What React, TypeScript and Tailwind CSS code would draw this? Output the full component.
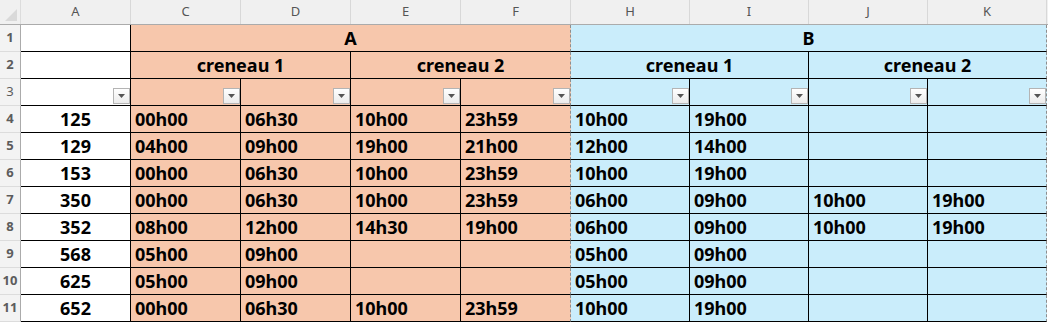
import React from "react";

const font = "font-['Noto_Sans','Liberation_Sans',sans-serif]";

type Col = { w: string; bg: string; edge: string; center?: boolean };

// visible sheet columns (B and G are hidden)
const cols: Col[] = [
  { w: "w-[110px]", bg: "bg-white", edge: "border-r-black", center: true },
  { w: "w-[110px]", bg: "bg-[#f7c7ac]", edge: "border-r-black" },
  { w: "w-[110px]", bg: "bg-[#f7c7ac]", edge: "border-r-black" },
  { w: "w-[110px]", bg: "bg-[#f7c7ac]", edge: "border-r-black" },
  { w: "w-[110px]", bg: "bg-[#f7c7ac]", edge: "[border-right-style:dashed] border-r-[#8e8e8e]" },
  { w: "w-[119px]", bg: "bg-[#caedfb]", edge: "border-r-black" },
  { w: "w-[119px]", bg: "bg-[#caedfb]", edge: "border-r-black" },
  { w: "w-[119px]", bg: "bg-[#caedfb]", edge: "border-r-black" },
  { w: "w-[119px]", bg: "bg-[#caedfb]", edge: "[border-right-style:dashed] border-r-[#8e8e8e]" },
];

const letters = [
  { l: "A", w: "w-[110px]" },
  { l: "C", w: "w-[110px]" },
  { l: "D", w: "w-[110px]" },
  { l: "E", w: "w-[110px]" },
  { l: "F", w: "w-[110px]" },
  { l: "H", w: "w-[119px]" },
  { l: "I", w: "w-[119px]" },
  { l: "J", w: "w-[119px]" },
  { l: "K", w: "w-[119px]" },
];

const rows: [string, string[]][] = [
  ["125", ["00h00", "06h30", "10h00", "23h59", "10h00", "19h00", "", ""]],
  ["129", ["04h00", "09h00", "19h00", "21h00", "12h00", "14h00", "", ""]],
  ["153", ["00h00", "06h30", "10h00", "23h59", "10h00", "19h00", "", ""]],
  ["350", ["00h00", "06h30", "10h00", "23h59", "06h00", "09h00", "10h00", "19h00"]],
  ["352", ["08h00", "12h00", "14h30", "19h00", "06h00", "09h00", "10h00", "19h00"]],
  ["568", ["05h00", "09h00", "", "", "05h00", "09h00", "", ""]],
  ["625", ["05h00", "09h00", "", "", "05h00", "09h00", "", ""]],
  ["652", ["00h00", "06h30", "10h00", "23h59", "10h00", "19h00", "", ""]],
];

function RowHead({ n }: { n: number }) {
  return (
    <div className="w-[21px] shrink-0 flex items-center justify-center bg-[#f3f3f3] border-r border-r-[#ababab] border-b border-b-[#dcdcdc] text-[13px] text-[#5c5c5c]">
      {n}
    </div>
  );
}

function Filter() {
  return (
    <div className="w-[17px] h-[16px] flex items-center justify-center border border-[#b4b4b4] bg-gradient-to-b from-white to-[#ececec]">
      <svg width="7" height="4" viewBox="0 0 7 4">
        <path d="M0 0h7L3.5 4z" fill="#555" />
      </svg>
    </div>
  );
}

export default function App() {
  return (
    <div className={`w-[1048px] h-[322px] overflow-hidden bg-white text-black ${font}`}>
      {/* column letters */}
      <div className="flex h-[25px] bg-[#f0f0f0] border-b border-b-[#ababab]">
        <div className="w-[21px] shrink-0 flex items-end justify-end p-[3px] border-r border-r-[#dcdcdc]">
          <svg width="12" height="12" viewBox="0 0 12 12">
            <path d="M12 0V12H0z" fill="#d9d9d9" />
          </svg>
        </div>
        {letters.map((c) => (
          <div
            key={c.l}
            className={`${c.w} shrink-0 flex items-center justify-center border-r border-r-[#d8d8d8] text-[13px] text-[#555]`}
          >
            {c.l}
          </div>
        ))}
      </div>

      {/* row 1 */}
      <div className="flex h-[27px] text-[18px] font-bold">
        <RowHead n={1} />
        <div className="w-[110px] shrink-0 bg-white border-b border-r border-b-black border-r-black" />
        <div className="w-[440px] shrink-0 flex items-center justify-center bg-[#f7c7ac] border-b border-r border-b-black [border-right-style:dashed] border-r-[#8e8e8e]">
          A
        </div>
        <div className="w-[476px] shrink-0 flex items-center justify-center bg-[#caedfb] border-b border-r border-b-black [border-right-style:dashed] border-r-[#8e8e8e]">
          B
        </div>
      </div>

      {/* row 2 */}
      <div className="flex h-[27px] text-[18px] font-bold">
        <RowHead n={2} />
        <div className="w-[110px] shrink-0 bg-white border-b border-r border-b-black border-r-black" />
        <div className="w-[220px] shrink-0 flex items-center justify-center bg-[#f7c7ac] border-b border-r border-b-black border-r-black">
          creneau 1
        </div>
        <div className="w-[220px] shrink-0 flex items-center justify-center bg-[#f7c7ac] border-b border-r border-b-black [border-right-style:dashed] border-r-[#8e8e8e]">
          creneau 2
        </div>
        <div className="w-[238px] shrink-0 flex items-center justify-center bg-[#caedfb] border-b border-r border-b-black border-r-black">
          creneau 1
        </div>
        <div className="w-[238px] shrink-0 flex items-center justify-center bg-[#caedfb] border-b border-r border-b-black [border-right-style:dashed] border-r-[#8e8e8e]">
          creneau 2
        </div>
      </div>

      {/* row 3: filter buttons */}
      <div className="flex h-[27px]">
        <RowHead n={3} />
        {cols.map((c, i) => (
          <div
            key={i}
            className={`${c.w} ${c.bg} ${c.edge} shrink-0 flex items-end justify-end pb-[1px] border-b border-r border-b-black`}
          >
            <Filter />
          </div>
        ))}
      </div>

      {/* data rows */}
      {rows.map(([id, times], r) => (
        <div key={id} className="flex h-[27px] text-[18px] font-bold">
          <RowHead n={r + 4} />
          {[id, ...times].map((v, i) => (
            <div
              key={i}
              className={`${cols[i].w} ${cols[i].bg} ${cols[i].edge} shrink-0 flex items-center pt-[1px] border-b border-r border-b-black ${
                cols[i].center ? "justify-center" : "pl-[4px]"
              }`}
            >
              {v}
            </div>
          ))}
        </div>
      ))}
    </div>
  );
}
